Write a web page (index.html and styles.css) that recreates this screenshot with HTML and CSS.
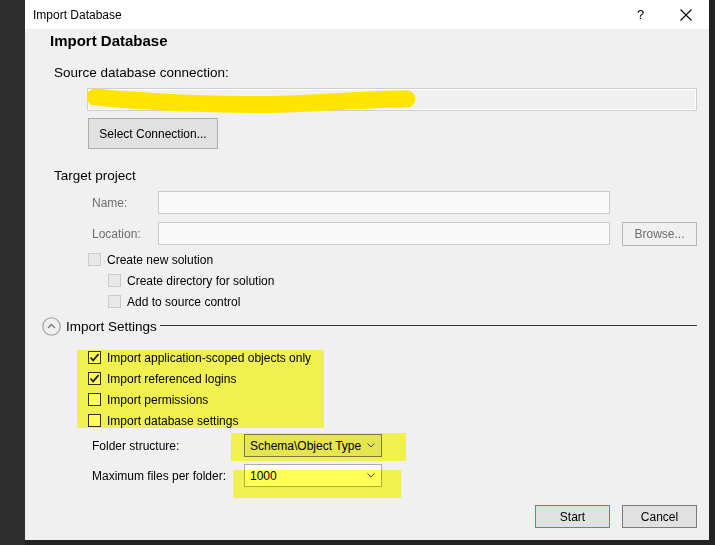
FILE: index.html
```html
<!DOCTYPE html>
<html lang="en">
<head>
    <meta charset="UTF-8">
    <meta name="viewport" content="width=device-width, initial-scale=1.0">
    <title>Import Database</title>
    <link rel="stylesheet" href="styles.css">
</head>
<body>
    <div class="dialog">
        <div class="titlebar">
            <span class="title">Import Database</span>
            <span class="caption-btn help">?</span>
            <span class="caption-btn close">
                <svg width="12" height="12" viewBox="0 0 12 12">
                    <path d="M0.5 0.5 L11.5 11.5 M11.5 0.5 L0.5 11.5" stroke="#000" stroke-width="1.1" fill="none"/>
                </svg>
            </span>
        </div>

        <div class="content">
            <h1 class="heading">Import Database</h1>

            <div class="section-label">Source database connection:</div>
            <div class="conn-box">
                <!-- redaction scribble -->
                <svg class="scribble" width="340" height="30" viewBox="0 0 340 30">
                    <path d="M8 9 C 60 14, 140 18, 200 16 S 295 10, 320 11" stroke="#ffe500" stroke-width="17" stroke-linecap="round" fill="none"/>
                </svg>
            </div>
            <button class="btn btn-select">Select Connection...</button>

            <div class="section-label target">Target project</div>
            <div class="field-row">
                <span class="field-label">Name:</span>
                <div class="textbox"></div>
            </div>
            <div class="field-row location">
                <span class="field-label">Location:</span>
                <div class="textbox"></div>
                <button class="btn btn-browse">Browse...</button>
            </div>
            <div class="checks disabled">
                <div class="check"><span class="box"></span>Create new solution</div>
                <div class="check sub"><span class="box"></span>Create directory for solution</div>
                <div class="check sub"><span class="box"></span>Add to source control</div>
            </div>

            <div class="group-header">
                <span class="collapse-icon">
                    <svg width="19" height="19" viewBox="0 0 19 19">
                        <circle cx="9.5" cy="9.5" r="8.7" stroke="#9c9c9c" stroke-width="1.1" fill="none"/>
                        <path d="M6 11 L9.5 7.5 L13 11" stroke="#777" stroke-width="1.3" fill="none"/>
                    </svg>
                </span>
                <span class="group-title">Import Settings</span>
                <span class="rule"></span>
            </div>

            <div class="checks options">
                <div class="check checked"><span class="box"><svg width="11" height="11" viewBox="0 0 11 11"><path d="M1.5 5.5 L4.2 8.3 L9.6 2" stroke="#1a1a1a" stroke-width="1.8" fill="none"/></svg></span>Import application-scoped objects only</div>
                <div class="check checked"><span class="box"><svg width="11" height="11" viewBox="0 0 11 11"><path d="M1.5 5.5 L4.2 8.3 L9.6 2" stroke="#1a1a1a" stroke-width="1.8" fill="none"/></svg></span>Import referenced logins</div>
                <div class="check"><span class="box"></span>Import permissions</div>
                <div class="check"><span class="box"></span>Import database settings</div>
                <span class="marker marker-options"></span>
            </div>

            <div class="combo-row">
                <span class="combo-label">Folder structure:</span>
                <div class="combo focused">
                    <span class="combo-value">Schema\Object Type</span>
                    <svg class="chevron" width="8" height="5" viewBox="0 0 8 5"><path d="M0.5 0.5 L4 4 L7.5 0.5" stroke="#444" stroke-width="1" fill="none"/></svg>
                    <span class="marker marker-folder"></span>
                </div>
            </div>
            <div class="combo-row second">
                <span class="combo-label">Maximum files per folder:</span>
                <div class="combo">
                    <span class="combo-value">1000</span>
                    <svg class="chevron" width="8" height="5" viewBox="0 0 8 5"><path d="M0.5 0.5 L4 4 L7.5 0.5" stroke="#444" stroke-width="1" fill="none"/></svg>
                    <span class="marker marker-files"></span>
                </div>
            </div>

            <div class="actions">
                <button class="btn btn-default">Start</button>
                <button class="btn btn-cancel">Cancel</button>
            </div>
        </div>
    </div>
</body>
</html>
```

FILE: styles.css
```css
body {
    margin: 0;
    background: linear-gradient(to right, #2d2d2d 25px, #232323 25px);
    font-family: "Liberation Sans", Arial, sans-serif;
    font-size: 12px;
    color: #000;
}

.dialog {
    margin-left: 25px;
    width: 684px;
    height: 540px;
    background: #f0f0f0;
    display: flex;
    flex-direction: column;
}

.titlebar {
    height: 29px;
    background: #fff;
    display: flex;
    align-items: center;
    padding-left: 8px;
    padding-right: 1px;
}

.title {
    flex: 1;
    font-size: 12px;
}

.caption-btn {
    width: 45px;
    height: 29px;
    display: flex;
    align-items: center;
    justify-content: center;
}

.help {
    font-size: 13px;
}

.content {
    flex: 1;
    padding: 0 12px 12px 29px;
    display: flex;
    flex-direction: column;
}

.heading {
    margin: 1px 0 0 -4px;
    font-size: 15px;
    font-weight: bold;
    line-height: 22px;
}

.section-label {
    margin-top: 11px;
    font-size: 13.5px;
    line-height: 20px;
}

.section-label.target {
    margin-top: 17px;
}

.conn-box {
    position: relative;
    margin: 5px 0 0 33px;
    height: 21px;
    border: 1px solid #cfcfcf;
    box-shadow: inset 0 0 0 1px #fff;
    background: #f0f0f0;
}

.scribble {
    position: absolute;
    left: -1px;
    top: -1px;
}

.btn {
    font-family: inherit;
    font-size: 12px;
    color: #000;
    background: #e1e1e1;
    border: 1px solid #adadad;
    padding: 0;
    border-radius: 0;
}

.btn-select {
    margin: 7px 0 0 34px;
    width: 130px;
    height: 31px;
    align-self: flex-start;
}

.field-row {
    display: flex;
    align-items: center;
    margin: 5px 0 0 38px;
    height: 23px;
}

.field-row.location {
    margin-top: 8px;
}

.field-label {
    width: 66px;
    color: #6d6d6d;
}

.textbox {
    width: 450px;
    height: 21px;
    background: #f9f9f9;
    border: 1px solid #cacaca;
}

.btn-browse {
    margin-left: 12px;
    width: 75px;
    height: 24px;
    background: #f0f0f0;
    border-color: #b4b8ba;
    color: #6d6d6d;
}

.checks {
    position: relative;
    margin-top: 4px;
}

.check {
    display: flex;
    align-items: center;
    height: 21px;
    margin-left: 34px;
}

.check.sub {
    margin-left: 54px;
}

.box {
    width: 11px;
    height: 11px;
    margin-right: 6px;
    border: 1px solid #333;
    background: #fff;
    display: flex;
    align-items: center;
    justify-content: center;
}

.disabled .box {
    border-color: #cbcbcb;
    background: #e8e8e8;
}

.group-header {
    display: flex;
    align-items: center;
    height: 20px;
    margin: 4px 0 0 -12px;
}

.collapse-icon {
    width: 19px;
    height: 19px;
    margin-right: 5px;
}

.group-title {
    font-size: 13.5px;
}

.rule {
    flex: 1;
    height: 1px;
    margin: 0 0 2px 3px;
    background: #333;
}

.checks.options {
    margin-top: 11px;
}

/* highlighter strokes over the settings */
.marker {
    position: absolute;
    background: #ffff55;
    mix-blend-mode: multiply;
}

.marker-options {
    left: 23px;
    top: 3px;
    width: 247px;
    height: 78px;
}

.combo-row {
    display: flex;
    align-items: center;
    margin: 3px 0 0 38px;
}

.combo-row.second {
    margin-top: 7px;
}

.combo-label {
    width: 152px;
}

.combo {
    position: relative;
    box-sizing: border-box;
    width: 138px;
    height: 23px;
    border: 1px solid #abadb3;
    background: #fff;
    display: flex;
    align-items: center;
    padding-left: 5px;
}

.combo.focused {
    background: #e5e5e5;
    border-color: #7a7a7a;
}

.combo-value {
    flex: 1;
}

.chevron {
    margin-right: 6px;
}

.marker-folder {
    left: -14px;
    top: -2px;
    width: 175px;
    height: 28px;
}

.marker-files {
    left: -12px;
    top: 5px;
    width: 168px;
    height: 28px;
}

.actions {
    margin-top: auto;
    display: flex;
    justify-content: flex-end;
    gap: 12px;
}

.btn-default,
.btn-cancel {
    width: 75px;
    height: 23px;
}

.btn-default {
    border-color: #3c8ae8;
}

.btn-cancel {
    border-color: #7a7a7a;
}
```
